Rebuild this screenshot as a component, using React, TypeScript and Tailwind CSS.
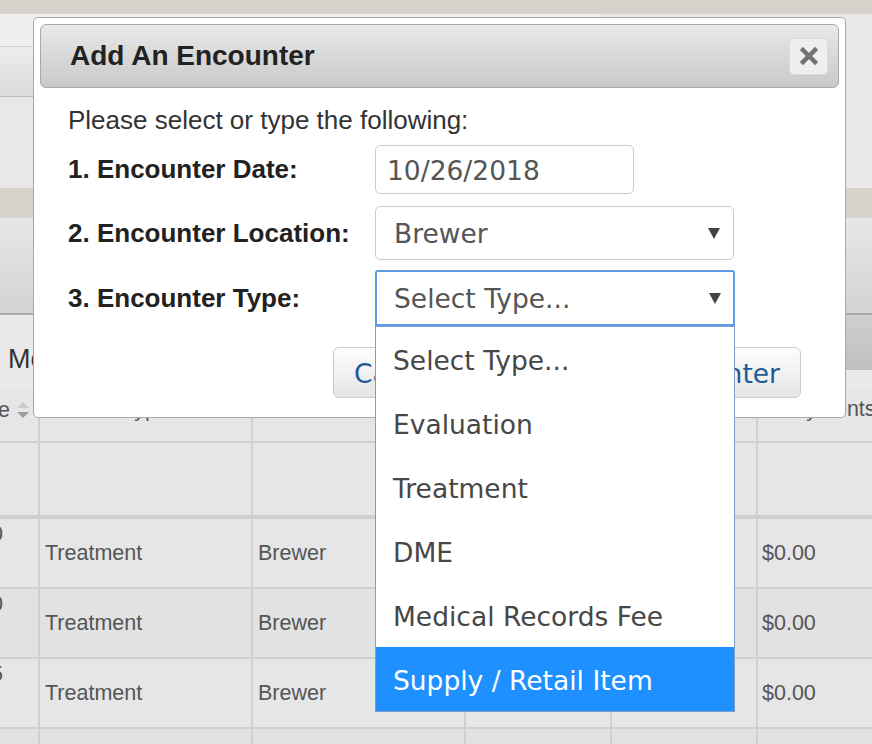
import React from "react";

const verdana = "font-['DejaVu_Sans',Verdana,sans-serif]";

const Caret = () => (
  <svg width="12" height="11" viewBox="0 0 12 11">
    <polygon points="0,0 12,0 6,11" fill="#444" />
  </svg>
);

const SortArrows = () => (
  <svg width="12" height="17" viewBox="0 0 12 17" className="shrink-0">
    <polygon points="0,6 6,0 12,6" fill="#c9c9c9" />
    <polygon points="0,10 12,10 6,16" fill="#9c9c9c" />
  </svg>
);

const typeOptions = [
  "Select Type...",
  "Evaluation",
  "Treatment",
  "DME",
  "Medical Records Fee",
  "Supply / Retail Item",
];

const rows = [
  { bg: "bg-[#e6e6e6]", mark: "0" },
  { bg: "bg-[#e2e2e2]", mark: "0" },
  { bg: "bg-[#e6e6e6]", mark: "5" },
];

const cols = "grid grid-cols-[40px_213px_213px_146px_146px_1fr]";
const cell = "border-r-2 border-[#d0d0d0]";

export default function App() {
  return (
    <div className="relative w-[872px] h-[744px] overflow-hidden bg-[#e6e6e6] font-['Liberation_Sans',Arial,sans-serif]">
      {/* page behind the dialog */}
      <div className="h-[14px] bg-[#d7d2cb]" />
      <div className="flex h-[174px] bg-[#e9e9e9]">
        <div className="w-[600px] flex flex-col">
          <div className="h-[33px] bg-[#efefef] border-b border-[#cfcfcf]" />
          <div className="h-[50px] bg-gradient-to-b from-[#ececec] to-[#dcdcdc] border-b border-[#b8b8b8]" />
          <div className="flex-1 bg-[#e8e8e8]" />
        </div>
      </div>
      <div className="h-[30px] bg-[#d7d2cb]" />
      <div className="h-[97px] bg-gradient-to-b from-[#e7e7e7] to-[#d3d3d3] border-b-2 border-[#a9a9a9]" />
      <div className="flex h-[75px] bg-[#e9e9e9]">
        <div className="pl-[8px] pt-[24px] text-[27px] text-[#333] whitespace-nowrap">Menu</div>
        <div className="ml-auto w-[180px] h-[55px] bg-gradient-to-b from-[#cfcfcf] to-[#bebebe]" />
      </div>

      {/* table */}
      <div className={`${cols} h-[53px] border-b-2 border-[#d0d0d0] text-[21.5px] text-[#555]`}>
        <div className={`${cell} flex items-center justify-end pr-[9px] pb-[10px] overflow-hidden`}>
          <span className="whitespace-nowrap shrink-0 mr-[7px]">Date</span>
          <SortArrows />
        </div>
        <div className={`${cell} flex items-center justify-center pb-[12px]`}>Type</div>
        <div className={`${cell} flex items-center justify-center pb-[12px]`}>Location</div>
        <div className={`${cell} flex items-center justify-center pb-[12px]`}>Provider</div>
        <div className={`${cell} flex items-center justify-center pb-[12px]`}>Charges</div>
        <div className="flex items-center pl-[22px] pb-[12px] whitespace-nowrap">Payments</div>
      </div>
      <div className={`${cols} h-[76px] border-b-4 border-[#cfcfcf]`}>
        <div className={cell} />
        <div className={cell} />
        <div className={cell} />
        <div className={cell} />
        <div className={cell} />
        <div />
      </div>
      {rows.map((r, i) => (
        <div key={i} className={`${cols} h-[70px] border-b-2 border-[#d0d0d0] ${r.bg} text-[21.5px] text-[#555]`}>
          <div className={`${cell} overflow-hidden`}>
            <div className="-ml-[9px] mt-[3px] leading-[24px]">{r.mark}</div>
          </div>
          <div className={`${cell} flex items-center pl-[5px]`}>Treatment</div>
          <div className={`${cell} flex items-center pl-[5px]`}>Brewer</div>
          <div className={cell} />
          <div className={cell} />
          <div className="flex items-center pl-[4px]">$0.00</div>
        </div>
      ))}
      <div className={`${cols} h-[70px] bg-[#e2e2e2]`}>
        <div className={cell} />
        <div className={cell} />
        <div className={cell} />
        <div className={cell} />
        <div className={cell} />
        <div />
      </div>

      {/* dialog */}
      <div className="absolute left-[33px] top-[17px] w-[813px] h-[401px] bg-white border border-[#a9a9a9] rounded-[5px] p-[6px]">
        <div className="h-[64px] rounded-[6px] border border-[#a9a9a9] bg-gradient-to-b from-[#e9e9e9] to-[#c9c9c9] flex items-center pl-[29px] pr-[10px]">
          <h2 className="text-[28px] font-bold text-[#222]">Add An Encounter</h2>
          <button className="ml-auto w-[39px] h-[37px] rounded-[5px] bg-[#efefef] border border-[#dcdcdc] flex items-center justify-center">
            <svg width="18" height="18" viewBox="0 0 18 18">
              <path d="M3 3 L15 15 M15 3 L3 15" stroke="#727272" strokeWidth="4.5" strokeLinecap="square" />
            </svg>
          </button>
        </div>

        <div className="pl-[28px] pr-[38px] flex flex-col text-[#222]">
          <p className="mt-[17px] text-[26px] leading-[30px] text-[#333]">Please select or type the following:</p>

          <div className="flex items-center mt-[10px]">
            <label className="w-[307px] text-[26px] font-bold">1. Encounter Date:</label>
            <div className={`w-[259px] h-[49px] border border-[#ccc] rounded-[5px] flex items-center pl-[11px] pt-[2px] text-[26.5px] text-[#555] ${verdana}`}>
              10/26/2018
            </div>
          </div>

          <div className="flex items-center mt-[12px]">
            <label className="w-[307px] text-[26px] font-bold">2. Encounter Location:</label>
            <div className={`w-[359px] h-[54px] border border-[#ccc] rounded-[5px] flex items-center pl-[18px] pr-[13px] text-[26.5px] text-[#555] ${verdana}`}>
              <span className="pt-[2px]">Brewer</span>
              <span className="ml-auto"><Caret /></span>
            </div>
          </div>

          <div className="flex items-center mt-[10px]">
            <label className="w-[307px] text-[26px] font-bold">3. Encounter Type:</label>
            <div className={`w-[360px] h-[56px] border-2 border-[#5f9be2] rounded-t-[3px] flex items-center pl-[17px] pr-[12px] text-[26.5px] text-[#555] ${verdana}`}>
              <span className="pt-[2px]">Select Type...</span>
              <span className="ml-auto"><Caret /></span>
            </div>
          </div>

          <div className={`flex justify-end gap-[99px] mt-[21px] text-[26.5px] text-[#1d5b96] ${verdana}`}>
            <button className="h-[51px] px-[20px] pt-[2px] rounded-[6px] border border-[#ccc] bg-gradient-to-b from-[#fdfdfd] to-[#e6e6e6]">Cancel</button>
            <button className="h-[51px] px-[20px] pt-[2px] rounded-[6px] border border-[#ccc] bg-gradient-to-b from-[#fdfdfd] to-[#e6e6e6]">Add Encounter</button>
          </div>
        </div>
      </div>

      {/* open select list */}
      <ul className={`absolute left-[375px] top-[326px] w-[360px] bg-white border border-[#7f9dca] ${verdana} text-[26.5px]`}>
        {typeOptions.map((o, i) => (
          <li
            key={o}
            className={`h-[64px] flex items-center pl-[17px] pt-[3px] ${i === typeOptions.length - 1 ? "bg-[#1e90ff] text-white" : "text-[#474747]"}`}
          >
            {o}
          </li>
        ))}
      </ul>
    </div>
  );
}
